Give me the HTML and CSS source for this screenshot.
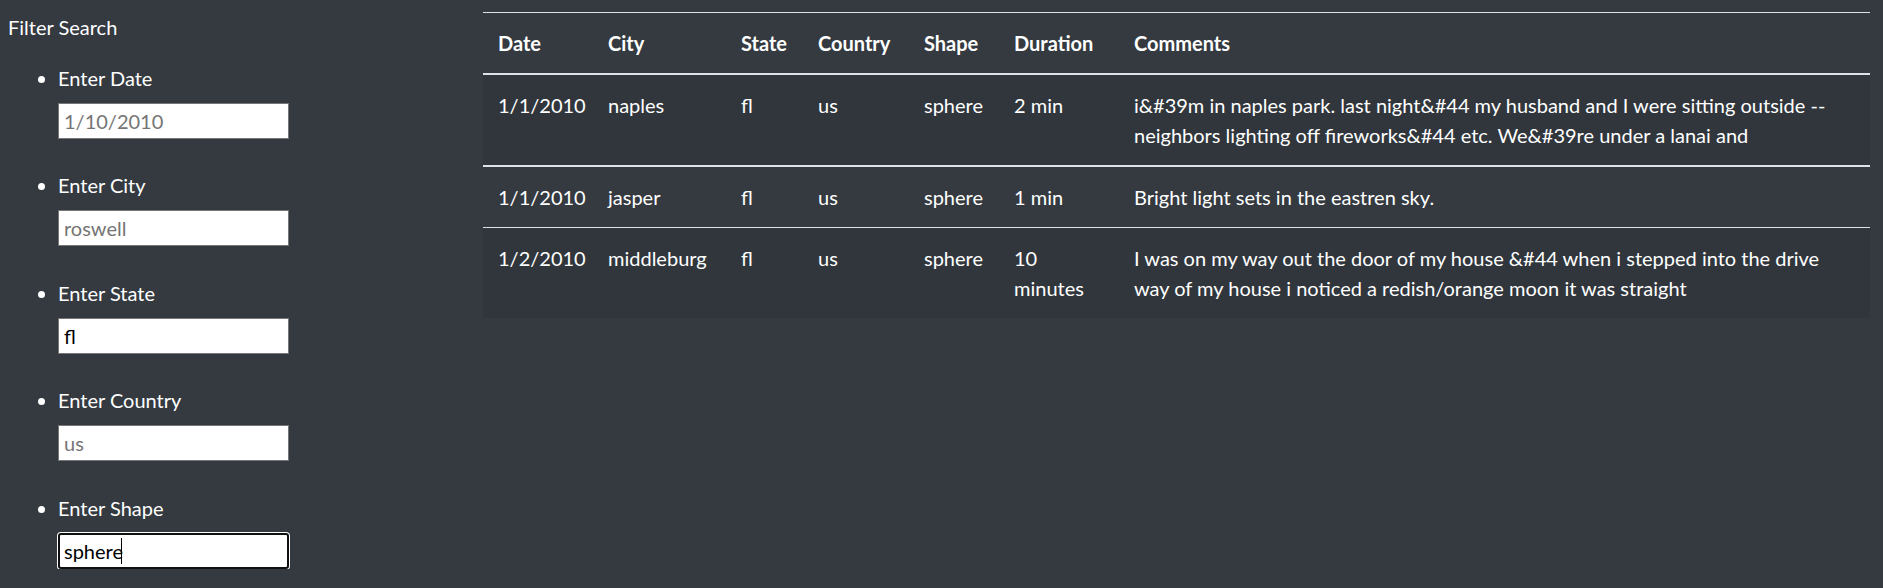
FILE: index.html
```html
<!DOCTYPE html>
<html lang="en">
<head>
<meta charset="utf-8">
<title>UFO Sightings</title>
<link rel="stylesheet" href="styles.css">
</head>
<body>
<div class="page">
  <aside class="filters">
    <div class="filters-title">Filter Search</div>
    <ul class="filter-list">
      <li class="filter-item">
        <label class="filter-label" for="datetime">Enter Date</label>
        <input class="filter-input" id="datetime" type="text" placeholder="1/10/2010">
      </li>
      <li class="filter-item">
        <label class="filter-label" for="city">Enter City</label>
        <input class="filter-input" id="city" type="text" placeholder="roswell">
      </li>
      <li class="filter-item">
        <label class="filter-label" for="state">Enter State</label>
        <input class="filter-input" id="state" type="text" value="fl">
      </li>
      <li class="filter-item">
        <label class="filter-label" for="country">Enter Country</label>
        <input class="filter-input" id="country" type="text" placeholder="us">
      </li>
      <li class="filter-item">
        <label class="filter-label" for="shape">Enter Shape</label>
        <span class="field">
          <input class="filter-input is-focused" id="shape" type="text" value="sphere">
          <span class="caret"></span>
        </span>
      </li>
    </ul>
  </aside>
  <main class="results">
    <table class="ufo-table">
      <colgroup>
        <col class="col-date">
        <col class="col-city">
        <col class="col-state">
        <col class="col-country">
        <col class="col-shape">
        <col class="col-duration">
        <col class="col-comments">
      </colgroup>
      <thead>
        <tr>
          <th>Date</th>
          <th>City</th>
          <th>State</th>
          <th>Country</th>
          <th>Shape</th>
          <th>Duration</th>
          <th>Comments</th>
        </tr>
      </thead>
      <tbody>
        <tr class="row-odd">
          <td>1/1/2010</td>
          <td>naples</td>
          <td>fl</td>
          <td>us</td>
          <td>sphere</td>
          <td>2 min</td>
          <td>i&amp;#39m in naples park. last night&amp;#44 my husband and I were sitting outside -- neighbors lighting off fireworks&amp;#44 etc. We&amp;#39re under a lanai and</td>
        </tr>
        <tr class="row-even sep-thick">
          <td>1/1/2010</td>
          <td>jasper</td>
          <td>fl</td>
          <td>us</td>
          <td>sphere</td>
          <td>1 min</td>
          <td>Bright light sets in the eastren sky.</td>
        </tr>
        <tr class="row-odd sep-thin">
          <td>1/2/2010</td>
          <td>middleburg</td>
          <td>fl</td>
          <td>us</td>
          <td>sphere</td>
          <td>10 minutes</td>
          <td>I was on my way out the door of my house &amp;#44 when i stepped into the drive way of my house i noticed a redish/orange moon it was straight</td>
        </tr>
      </tbody>
    </table>
  </main>
</div>
</body>
</html>
```

FILE: styles.css
```css
html, body {
  margin: 0;
  padding: 0;
}

body {
  background: #343a40;
  color: #ffffff;
  font-family: Lato, "Noto Sans", sans-serif;
  font-size: 20px;
  line-height: 30px;
  overflow: hidden;
}

.page {
  display: grid;
  grid-template-columns: 475px 1fr;
  padding: 0 13px 0 8px;
}

/* ---------- filters ---------- */
.filters {
  padding-top: 12px;
}

.filters-title {
  height: 30px;
}

.filter-list {
  margin: 21px 0 0 0;
  padding: 0 0 0 50px;
  list-style: disc;
}

.filter-item {
  margin-bottom: 31.4px;
}

.filter-item:last-child {
  margin-bottom: 0;
}

.filter-label {
  display: block;
}

.field {
  position: relative;
  display: block;
  width: 231px;
  margin-top: 10px;
}

.filter-input {
  display: block;
  box-sizing: border-box;
  width: 231px;
  height: 36px;
  margin: 10px 0 0 0;
  padding: 0 5px;
  border: 1px solid #767676;
  border-radius: 0;
  background: #ffffff;
  color: #000000;
  font-family: Lato, "Noto Sans", sans-serif;
  font-size: 20px;
  outline: none;
}

.field .filter-input {
  margin-top: 0;
}

.filter-input::placeholder {
  color: #757575;
  opacity: 1;
}

.filter-input.is-focused {
  border: 2px solid #101010;
  border-radius: 3px;
  padding: 0 4px;
  box-shadow: 0 0 0 1px #ffffff;
}

.caret {
  position: absolute;
  left: 63px;
  top: 5px;
  width: 1px;
  height: 26px;
  background: #000000;
}

/* ---------- table ---------- */
.results {
  padding-top: 12px;
}

.ufo-table {
  width: 100%;
  table-layout: fixed;
  border-collapse: separate;
  border-spacing: 0;
  color: #ffffff;
}

.col-date { width: 110px; }
.col-city { width: 133px; }
.col-state { width: 77px; }
.col-country { width: 106px; }
.col-shape { width: 90px; }
.col-duration { width: 120px; }

.ufo-table th {
  padding: 15px;
  text-align: left;
  font-weight: 700;
  vertical-align: bottom;
  border-top: 1px solid #dee2e6;
  border-bottom: 2px solid #dee2e6;
}

.ufo-table td {
  padding: 15px;
  vertical-align: top;
  font-weight: 400;
}

.row-odd td {
  background: rgba(0, 0, 0, 0.06);
}

.sep-thick td {
  border-top: 2px solid #dee2e6;
}

.sep-thin td {
  border-top: 1px solid #dee2e6;
}
```
